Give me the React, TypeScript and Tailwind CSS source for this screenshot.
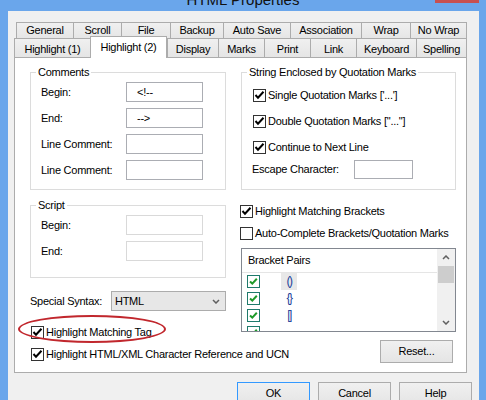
import type { ReactNode } from 'react'

const TOP_TABS = [
  { label: 'General', w: 'w-[57px]' },
  { label: 'Scroll', w: 'w-[48px]' },
  { label: 'File', w: 'w-[49px]' },
  { label: 'Backup', w: 'w-[53px]' },
  { label: 'Auto Save', w: 'w-[67px]' },
  { label: 'Association', w: 'w-[71px]' },
  { label: 'Wrap', w: 'w-[49px]' },
  { label: 'No Wrap', w: 'w-[57px]' },
]

const FRONT_TABS = [
  { label: 'Highlight (1)', w: 'w-[76px]' },
  { label: 'Highlight (2)', w: 'w-[77px]', active: true },
  { label: 'Display', w: 'w-[51px]' },
  { label: 'Marks', w: 'w-[46px]' },
  { label: 'Print', w: 'w-[46px]' },
  { label: 'Link', w: 'w-[46px]' },
  { label: 'Keyboard', w: 'w-[60px]' },
  { label: 'Spelling', w: 'w-[51px]' },
]

const PAIRS = ['()', '{}', '[]', '']

function CheckBox({ checked }: { checked: boolean }) {
  return (
    <span className="w-[13px] h-[13px] shrink-0 border border-[#333333] bg-white flex items-center justify-center">
      {checked && (
        <svg width="11" height="11" viewBox="0 0 11 11">
          <path d="M1.5 5 L4 7.8 L9.5 1.8" fill="none" stroke="#000" strokeWidth="2" />
        </svg>
      )}
    </span>
  )
}

function CheckRow({ checked, label }: { checked: boolean; label: string }) {
  return (
    <div className="flex items-center gap-[2px] h-[13px] whitespace-nowrap">
      <CheckBox checked={checked} />
      <span>{label}</span>
    </div>
  )
}

function ListCheck() {
  return (
    <span className="w-[13px] h-[13px] shrink-0 border border-[#1f7a6c] bg-white flex items-center justify-center">
      <svg width="11" height="11" viewBox="0 0 11 11">
        <path d="M2 5.5 L4.3 7.6 L8.8 2.8" fill="none" stroke="#1f9a2a" strokeWidth="2" />
      </svg>
    </span>
  )
}

function GroupBox({ title, className, children }: { title: string; className: string; children: ReactNode }) {
  return (
    <fieldset className={`border border-[#dcdcdc] ${className}`}>
      <legend className="ml-[5px] px-[2px] leading-[13px]">{title}</legend>
      {children}
    </fieldset>
  )
}

function TextBox({ value = '', disabled = false, w = 'w-[77px]', h = 'h-[20px]' }: { value?: string; disabled?: boolean; w?: string; h?: string }) {
  return (
    <div className={`${w} ${h} shrink-0 border ${disabled ? 'border-[#d9d9d9]' : 'border-[#abadb3]'} bg-white pl-[10px] flex items-center`}>
      {value}
    </div>
  )
}

function FieldRow({ label, children }: { label: string; children: ReactNode }) {
  return (
    <div className="flex items-center h-[20px]">
      <span className="w-[95px] pl-[10px]">{label}</span>
      {children}
    </div>
  )
}

function Chevron({ up = false }: { up?: boolean }) {
  return (
    <svg width="8" height="5" viewBox="0 0 8 5">
      <path d={up ? 'M1 4 L4 1 L7 4' : 'M1 1 L4 4 L7 1'} fill="none" stroke="#606060" strokeWidth="1.5" />
    </svg>
  )
}

function Button({ label, def = false, w = 'w-[73px]' }: { label: string; def?: boolean; w?: string }) {
  return (
    <div
      className={`${w} h-[23px] shrink-0 border ${def ? 'border-[#3399ff]' : 'border-[#acacac]'} bg-linear-to-b from-[#f0f0f0] to-[#e5e5e5] flex items-center justify-center`}
    >
      {label}
    </div>
  )
}

export default function App() {
  return (
    <div className="w-[486px] h-[400px] overflow-hidden relative flex flex-col bg-[#6aa6eb] text-black text-[11px] leading-[13px] tracking-[-0.25px] font-['Liberation_Sans',Arial,sans-serif]">
      {/* caption */}
      <div className="h-[11px] shrink-0 flex justify-center items-end overflow-hidden">
        <span className="text-[15px] leading-[15px] tracking-normal mb-[4px] text-[#111]">HTML Properties</span>
      </div>
      <div className="absolute top-0 left-[435px] w-[44px] h-[3px] bg-[#c75050]" />

      {/* client area */}
      <div className="flex-1 ml-[8px] mr-[7px] bg-[#f0f0f0] pt-[11px] pl-[6px]">
        {/* back tab row */}
        <div className="flex ml-[2px] h-[16px]">
          {TOP_TABS.map((t, i) => (
            <div
              key={t.label}
              className={`${t.w} h-[17px] shrink-0 border-t border-l ${i === TOP_TABS.length - 1 ? 'border-r' : ''} border-[#acacac] bg-linear-to-b from-[#f0f0f0] to-[#e5e5e5] flex items-center justify-center pb-[1px]`}
            >
              {t.label}
            </div>
          ))}
        </div>

        {/* front tab row */}
        <div className="flex h-[19px] relative">
          {FRONT_TABS.map((t, i) =>
            t.active ? (
              <div
                key={t.label}
                className={`${t.w} h-[22px] -mt-[2px] -mb-[1px] shrink-0 border-t border-x border-[#acacac] bg-white relative z-10 flex items-start justify-center pt-[4px]`}
              >
                {t.label}
              </div>
            ) : (
              <div
                key={t.label}
                className={`${t.w} h-[19px] shrink-0 border-t border-l ${i === FRONT_TABS.length - 1 ? 'border-r' : ''} border-[#acacac] bg-linear-to-b from-[#f0f0f0] to-[#e5e5e5] flex items-center justify-center pt-[2px]`}
              >
                {t.label}
              </div>
            )
          )}
        </div>

        {/* page */}
        <div className="w-[453px] h-[316px] border border-[#acacac] bg-white relative pt-[8px] pl-[15px]">
          <div className="flex gap-[15px] items-start">
            {/* left column */}
            <div className="w-[196px] flex flex-col">
              <GroupBox title="Comments" className="h-[124px]">
                <div className="pt-[3px] flex flex-col gap-[6px]">
                  <FieldRow label="Begin:">
                    <TextBox value="<!--" />
                  </FieldRow>
                  <FieldRow label="End:">
                    <TextBox value="-->" />
                  </FieldRow>
                  <FieldRow label="Line Comment:">
                    <TextBox />
                  </FieldRow>
                  <FieldRow label="Line Comment:">
                    <TextBox />
                  </FieldRow>
                </div>
              </GroupBox>

              <GroupBox title="Script" className="h-[79px] mt-[9px]">
                <div className="pt-[3px] flex flex-col gap-[6px]">
                  <FieldRow label="Begin:">
                    <TextBox disabled />
                  </FieldRow>
                  <FieldRow label="End:">
                    <TextBox disabled />
                  </FieldRow>
                </div>
              </GroupBox>

              <div className="mt-[13px] flex items-center h-[20px]">
                <span className="w-[84px]">Special Syntax:</span>
                <div className="w-[119px] h-[20px] border border-[#acacac] bg-[#e7e7e7] flex items-center justify-between pl-[3px] pr-[5px]">
                  <span>HTML</span>
                  <Chevron />
                </div>
              </div>

              <div className="mt-[15px] ml-[1px]">
                <CheckRow checked label="Highlight Matching Tag" />
              </div>
            </div>

            {/* right column */}
            <div className="w-[215px] flex flex-col">
              <GroupBox title="String Enclosed by Quotation Marks" className="h-[124px]">
                <div className="pt-[6px] pl-[11px] flex flex-col gap-[6px]">
                  <div className="h-[20px] flex items-center">
                    <CheckRow checked label="Single Quotation Marks ['...']" />
                  </div>
                  <div className="h-[20px] flex items-center">
                    <CheckRow checked label={'Double Quotation Marks ["..."]'} />
                  </div>
                  <div className="h-[20px] flex items-center">
                    <CheckRow checked label="Continue to Next Line" />
                  </div>
                </div>
                <div className="mt-[3px] flex items-center h-[19px]">
                  <span className="w-[112px] pl-[10px]">Escape Character:</span>
                  <TextBox w="w-[59px]" h="h-[19px]" />
                </div>
              </GroupBox>

              <div className="mt-[15px] -ml-[1px]">
                <CheckRow checked label="Highlight Matching Brackets" />
              </div>
              <div className="mt-[9px] -ml-[1px]">
                <CheckRow checked={false} label="Auto-Complete Brackets/Quotation Marks" />
              </div>

              {/* bracket pair list */}
              <div className="mt-[8px] h-[84px] border border-[#828790] bg-white flex overflow-hidden">
                <div className="flex-1 flex flex-col">
                  <div className="h-[24px] shrink-0 border-b border-[#e5e5e5] flex items-center pl-[6px]">Bracket Pairs</div>
                  {PAIRS.map((p, i) => (
                    <div key={i} className="h-[17px] shrink-0 flex items-center pl-[5px]">
                      <ListCheck />
                      <span
                        className={`ml-[21px] w-[16px] h-[17px] flex items-center justify-center text-[#23429a] text-[12px] tracking-[-1.5px] ${i === 0 ? 'bg-[#e8e8e8]' : ''}`}
                      >
                        {p}
                      </span>
                    </div>
                  ))}
                </div>
                <div className="w-[18px] shrink-0 bg-[#f0f0f0] flex flex-col items-center">
                  <div className="h-[17px] flex items-center justify-center">
                    <Chevron up />
                  </div>
                  <div className="w-[16px] h-[17px] bg-[#cdcdcd]" />
                  <div className="flex-1" />
                  <div className="h-[17px] flex items-center justify-center">
                    <Chevron />
                  </div>
                </div>
              </div>
            </div>
          </div>

          <div className="mt-[1px] h-[21px] flex items-end justify-between pr-[13px]">
            <div className="ml-[1px]">
              <CheckRow checked label="Highlight HTML/XML Character Reference and UCN" />
            </div>
            <div className="self-start">
              <Button label="Reset..." />
            </div>
          </div>

          {/* callout ring */}
          <div className="absolute left-[3px] top-[257px] w-[148px] h-[28px] border-2 border-[#c1272d] rounded-[50%]" />
        </div>

        {/* dialog buttons */}
        <div className="mt-[9px] flex justify-end gap-[8px] pr-[7px]">
          <Button label="OK" def />
          <Button label="Cancel" />
          <Button label="Help" />
        </div>
      </div>
    </div>
  )
}
